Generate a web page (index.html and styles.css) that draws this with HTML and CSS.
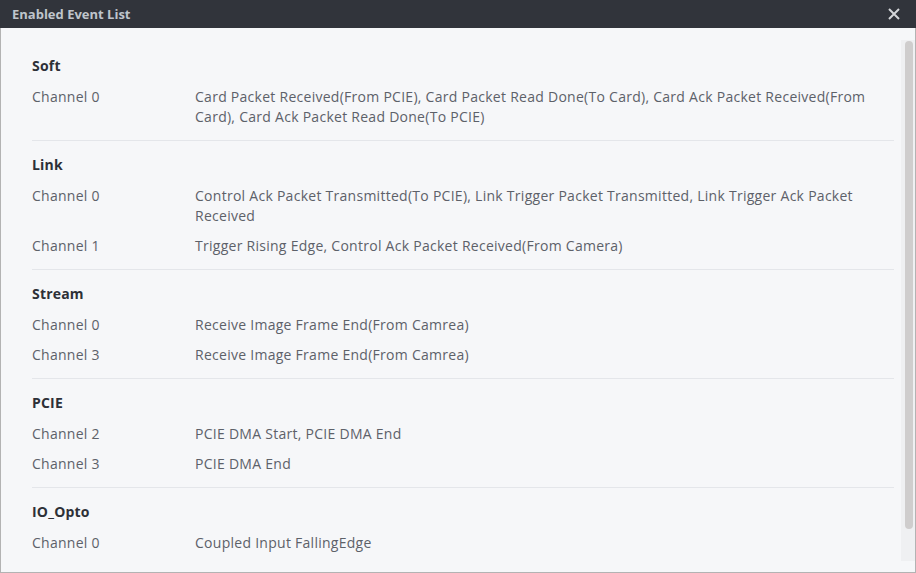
FILE: index.html
```html
<!DOCTYPE html>
<html>
<head>
<meta charset="utf-8">
<link rel="stylesheet" href="styles.css">
</head>
<body>
<div class="window">
  <div class="titlebar">
    <span class="title">Enabled Event List</span>
    <svg class="close" width="12" height="12" viewBox="0 0 12 12"><path d="M1 1 L11 11 M11 1 L1 11" stroke="#d4d6d9" stroke-width="2" fill="none"/></svg>
  </div>
  <div class="body">
    <div class="content">
      <div class="section first">
        <div class="heading">Soft</div>
        <div class="row"><div class="label">Channel 0</div><div class="value">Card Packet Received(From PCIE), Card Packet Read Done(To Card), Card Ack Packet Received(From Card), Card Ack Packet Read Done(To PCIE)</div></div>
      </div>
      <div class="section">
        <div class="heading">Link</div>
        <div class="row"><div class="label">Channel 0</div><div class="value">Control Ack Packet Transmitted(To PCIE), Link Trigger Packet Transmitted, Link Trigger Ack Packet Received</div></div>
        <div class="row"><div class="label">Channel 1</div><div class="value">Trigger Rising Edge, Control Ack Packet Received(From Camera)</div></div>
      </div>
      <div class="section">
        <div class="heading">Stream</div>
        <div class="row"><div class="label">Channel 0</div><div class="value">Receive Image Frame End(From Camrea)</div></div>
        <div class="row"><div class="label">Channel 3</div><div class="value">Receive Image Frame End(From Camrea)</div></div>
      </div>
      <div class="section">
        <div class="heading">PCIE</div>
        <div class="row"><div class="label">Channel 2</div><div class="value">PCIE DMA Start, PCIE DMA End</div></div>
        <div class="row"><div class="label">Channel 3</div><div class="value">PCIE DMA End</div></div>
      </div>
      <div class="section last">
        <div class="heading">IO_Opto</div>
        <div class="row"><div class="label">Channel 0</div><div class="value">Coupled Input FallingEdge</div></div>
      </div>
    </div>
    <div class="scrollbar"><div class="track"><div class="thumb"></div></div></div>
  </div>
</div>
</body>
</html>
```

FILE: styles.css
```css
* { box-sizing: border-box; }
html, body { margin: 0; padding: 0; }
body {
  width: 916px;
  height: 573px;
  overflow: hidden;
  font-family: "Open Sans", "Noto Sans", sans-serif;
  font-size: 14px;
  background: #f6f7f9;
}
.window {
  width: 916px;
  height: 573px;
  display: flex;
  flex-direction: column;
}
.titlebar {
  height: 28px;
  flex: none;
  background: #31343b;
  display: flex;
  align-items: center;
  justify-content: space-between;
  padding: 0 16px 0 12px;
}
.title {
  color: #bfc5cc;
  font-size: 13px;
  font-weight: 700;
  line-height: 16px;
}
.close { display: block; }
.body {
  flex: 1;
  min-height: 0;
  display: flex;
  border: 1px solid #b3b3b3;
  border-top: none;
  background: #f6f7f9;
}
.content {
  flex: 1;
  min-width: 0;
  overflow: hidden;
  padding: 0 7px 0 31px;
  letter-spacing: 0.27px;
}
.section {
  border-bottom: 1px solid #e4e6ea;
  padding: 14px 0 8px;
}
.section.first { padding-top: 28px; }
.section.last { border-bottom: none; }
.heading {
  font-weight: 700;
  color: #2d3037;
  line-height: 20px;
  margin-bottom: 6px;
  letter-spacing: 0.2px;
}
.row {
  display: flex;
  line-height: 20px;
  padding: 5px 0;
  color: #5d6169;
}
.label {
  width: 163px;
  flex: none;
}
.value { flex: 1; }
.scrollbar {
  width: 14px;
  flex: none;
  padding: 12px 0 11px;
  display: flex;
}
.track {
  flex: 1;
  background: #eff0f2;
  padding: 1px 2px 0 4px;
}
.thumb {
  width: 8px;
  height: 488px;
  border-radius: 4px;
  background: #cfcdcd;
}
```
